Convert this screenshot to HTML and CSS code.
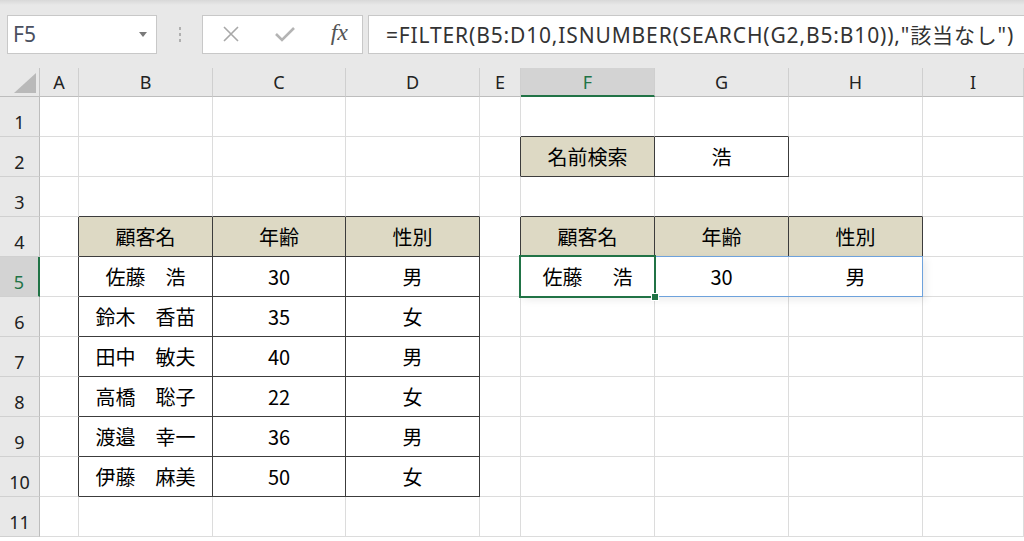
FILE: index.html
```html
<!DOCTYPE html>
<html lang="ja">
<head>
  <meta charset="UTF-8">
  <title>FILTER SEARCH</title>
  <link rel="stylesheet" href="styles.css">
</head>
<body>
  <div class="toolbar">
    <div class="namebox">
      <span>F5</span>
      <svg class="drop" width="8" height="5" viewBox="0 0 8 5"><path d="M0 0 L8 0 L4 5 Z" fill="#7a7a7a"/></svg>
    </div>
    <div class="grip">
      <svg width="4" height="16" viewBox="0 0 4 16"><rect x="1" y="1" width="2" height="3" fill="#b0b0b0"/><rect x="1" y="7" width="2" height="3" fill="#b0b0b0"/><rect x="1" y="13" width="2" height="3" fill="#b0b0b0"/></svg>
    </div>
    <div class="fbuttons">
      <svg width="16" height="16" viewBox="0 0 16 16"><path d="M1 1 L15 15 M15 1 L1 15" stroke="#a8a8a8" stroke-width="1.6" fill="none"/></svg>
      <svg width="20" height="16" viewBox="0 0 20 16"><path d="M1 8 L7 14 L19 2" stroke="#b4b4b4" stroke-width="2.6" fill="none"/></svg>
      <span class="fx">fx</span>
    </div>
    <div class="formula">=FILTER(B5:D10,ISNUMBER(SEARCH(G2,B5:B10)),"該当なし")</div>
  </div>

  <div class="sheet">
    <div class="row head">
      <div class="corner"><span class="tri"></span></div>
      <div class="ch">A</div><div class="ch">B</div><div class="ch">C</div><div class="ch">D</div><div class="ch">E</div>
      <div class="ch on">F</div><div class="ch">G</div><div class="ch">H</div><div class="ch">I</div>
    </div>

    <div class="row">
      <div class="rh">1</div>
      <div class="c"></div><div class="c"></div><div class="c"></div><div class="c"></div><div class="c"></div>
      <div class="c eb"></div><div class="c eb"></div><div class="c"></div><div class="c"></div>
    </div>

    <div class="row">
      <div class="rh">2</div>
      <div class="c"></div><div class="c"></div><div class="c"></div><div class="c"></div><div class="c er"></div>
      <div class="c b hd">名前検索</div><div class="c b">浩</div><div class="c"></div><div class="c"></div>
    </div>

    <div class="row">
      <div class="rh">3</div>
      <div class="c"></div><div class="c eb"></div><div class="c eb"></div><div class="c eb"></div><div class="c"></div>
      <div class="c eb"></div><div class="c eb"></div><div class="c eb"></div><div class="c"></div>
    </div>

    <div class="row">
      <div class="rh">4</div>
      <div class="c er"></div><div class="c b hd">顧客名</div><div class="c b hd">年齢</div><div class="c b hd">性別</div><div class="c er"></div>
      <div class="c b hd">顧客名</div><div class="c b hd">年齢</div><div class="c b hd">性別</div><div class="c"></div>
    </div>

    <div class="row">
      <div class="rh on">5</div>
      <div class="c er"></div><div class="c b">佐藤　浩</div><div class="c b">30</div><div class="c b">男</div><div class="c"></div>
      <div class="c sel"><div class="spill"></div><div class="active"><span class="handle"></span></div>佐藤　&ensp;浩</div>
      <div class="c">30</div><div class="c">男</div><div class="c"></div>
    </div>

    <div class="row">
      <div class="rh">6</div>
      <div class="c er"></div><div class="c b">鈴木　香苗</div><div class="c b">35</div><div class="c b">女</div><div class="c"></div>
      <div class="c"></div><div class="c"></div><div class="c"></div><div class="c"></div>
    </div>

    <div class="row">
      <div class="rh">7</div>
      <div class="c er"></div><div class="c b">田中　敏夫</div><div class="c b">40</div><div class="c b">男</div><div class="c"></div>
      <div class="c"></div><div class="c"></div><div class="c"></div><div class="c"></div>
    </div>

    <div class="row">
      <div class="rh">8</div>
      <div class="c er"></div><div class="c b">高橋　聡子</div><div class="c b">22</div><div class="c b">女</div><div class="c"></div>
      <div class="c"></div><div class="c"></div><div class="c"></div><div class="c"></div>
    </div>

    <div class="row">
      <div class="rh">9</div>
      <div class="c er"></div><div class="c b">渡邉　幸一</div><div class="c b">36</div><div class="c b">男</div><div class="c"></div>
      <div class="c"></div><div class="c"></div><div class="c"></div><div class="c"></div>
    </div>

    <div class="row">
      <div class="rh">10</div>
      <div class="c er"></div><div class="c b">伊藤　麻美</div><div class="c b">50</div><div class="c b">女</div><div class="c"></div>
      <div class="c"></div><div class="c"></div><div class="c"></div><div class="c"></div>
    </div>

    <div class="row">
      <div class="rh">11</div>
      <div class="c"></div><div class="c"></div><div class="c"></div><div class="c"></div><div class="c"></div>
      <div class="c"></div><div class="c"></div><div class="c"></div><div class="c"></div>
    </div>
  </div>
</body>
</html>
```

FILE: styles.css
```css
body {
  margin: 0;
  background-color: #fff;
  font-family: "Noto Sans CJK JP", sans-serif;
  color: #000;
  overflow: hidden;
}
.toolbar {
  height: 68px;
  display: flex;
  align-items: center;
  padding-left: 7px;
  background: linear-gradient(#d8d8d8 0px, #e8e8e8 5px, #e8e8e8 100%);
  box-sizing: border-box;
}
.namebox {
  width: 150px;
  height: 39px;
  box-sizing: border-box;
  background-color: #fff;
  border: 1px solid #c8c8c8;
  display: flex;
  align-items: center;
  justify-content: space-between;
  padding: 0 9px 0 5px;
  font-family: "Noto Sans", sans-serif;
  font-size: 21px;
  color: #4a5060;
}
.grip {
  width: 45px;
  display: flex;
  justify-content: center;
}
.fbuttons {
  width: 161px;
  height: 39px;
  box-sizing: border-box;
  background-color: #fff;
  border: 1px solid #c8c8c8;
  display: flex;
  align-items: center;
  justify-content: space-between;
  padding: 0 14px 0 20px;
}
.fx {
  font-family: "Liberation Serif", serif;
  font-style: italic;
  font-size: 24px;
  color: #555;
  margin-top: -3px;
}
.formula {
  flex: 1;
  height: 39px;
  margin-left: 5px;
  margin-right: -4px;
  box-sizing: border-box;
  background-color: #fff;
  border: 1px solid #c8c8c8;
  padding-left: 17px;
  display: flex;
  align-items: center;
  font-family: "Noto Sans", "Noto Sans CJK JP", sans-serif;
  font-size: 21px;
  letter-spacing: 0.85px;
  color: #333;
  white-space: nowrap;
}

.row {
  display: grid;
  grid-template-columns: 40px 39px 134px 133px 134px 41px 134px 134px 134px 101px;
  grid-template-rows: 40px;
  height: 40px;
}
.row.head {
  grid-template-rows: 29px;
  height: 29px;
  background-color: #e8e8e8;
}
.corner {
  position: relative;
  border-right: 1px solid #c4c4c4;
  border-bottom: 1px solid #bdbdbd;
  box-sizing: border-box;
}
.tri {
  position: absolute;
  right: 3px;
  bottom: 3px;
  width: 0;
  height: 0;
  border-left: 22px solid transparent;
  border-bottom: 20px solid #b9b9b9;
}
.ch {
  box-sizing: border-box;
  border-right: 1px solid #cfcfcf;
  border-bottom: 1px solid #bdbdbd;
  display: flex;
  align-items: center;
  justify-content: center;
  font-family: "Noto Sans", sans-serif;
  font-size: 18px;
  color: #222;
}
.ch.on {
  background-color: #d3d3d3;
  color: #217346;
  border-bottom: 2px solid #217346;
}
.rh {
  box-sizing: border-box;
  background-color: #e8e8e8;
  border-right: 1px solid #bdbdbd;
  border-bottom: 1px solid #d0d0d0;
  display: flex;
  align-items: flex-end;
  justify-content: center;
  padding-bottom: 2px;
  font-family: "Noto Sans", sans-serif;
  font-size: 18px;
  line-height: 24px;
  color: #222;
}
.rh.on {
  background-color: #d3d3d3;
  color: #217346;
  border-right: 2px solid #217346;
}
.c {
  box-sizing: border-box;
  min-height: 0;
  border-right: 1px solid #dcdcdc;
  border-bottom: 1px solid #dcdcdc;
  display: flex;
  align-items: center;
  justify-content: center;
  font-size: 20px;
  white-space: nowrap;
}
.c.b {
  border-right-color: #3c3c3c;
  border-bottom-color: #3c3c3c;
}
.c.er {
  border-right-color: #3c3c3c;
}
.c.eb {
  border-bottom-color: #3c3c3c;
}
.c.hd {
  background-color: #ddd9c4;
}
.c.sel {
  position: relative;
}
.spill {
  position: absolute;
  left: -1px;
  top: -1px;
  width: 403px;
  height: 41px;
  box-sizing: border-box;
  border: 1px solid #6ea2dc;
  box-shadow: 3px 3px 8px rgba(0, 0, 0, 0.08);
}
.active {
  position: absolute;
  left: -2px;
  top: -2px;
  width: 137px;
  height: 43px;
  box-sizing: border-box;
  border: 2px solid #217346;
  z-index: 2;
}
.handle {
  position: absolute;
  right: -5px;
  bottom: -5px;
  width: 6px;
  height: 6px;
  background-color: #217346;
  border: 1px solid #fff;
}
```
